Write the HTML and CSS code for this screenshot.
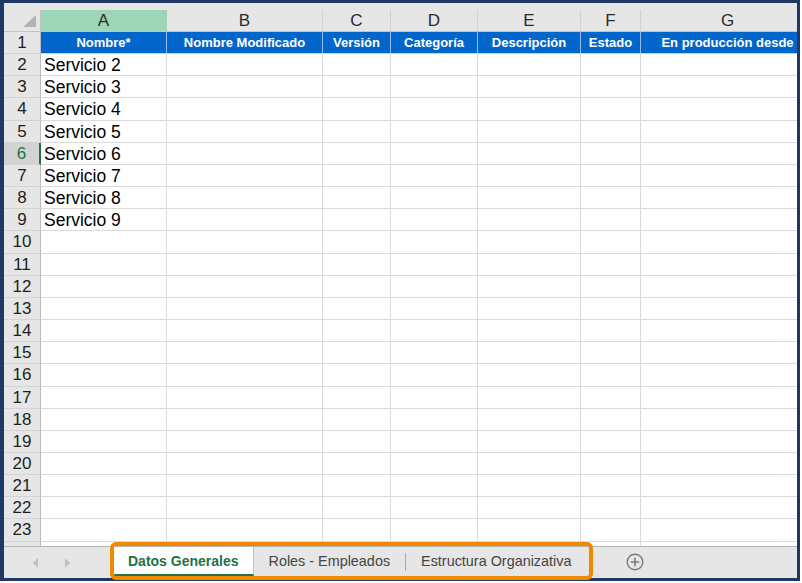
FILE: index.html
```html
<!DOCTYPE html>
<html lang="es">
<head>
    <meta charset="UTF-8">
    <title>Datos Generales</title>
    <link rel="stylesheet" href="styles.css">
</head>
<body>
    <div class="frame">
        <div class="sheet">
            <div class="grid" id="grid">
                <div class="corner"></div>
                <div class="col-head active">A</div>
                <div class="col-head">B</div>
                <div class="col-head">C</div>
                <div class="col-head">D</div>
                <div class="col-head">E</div>
                <div class="col-head">F</div>
                <div class="col-head">G</div>
            </div>
        </div>

        <div class="tabbar">
            <div class="nav">
                <span class="arrow left"></span>
                <span class="arrow right"></span>
            </div>
            <div class="tab current">Datos Generales</div>
            <div class="tab">Roles - Empleados</div>
            <span class="divider"></span>
            <div class="tab">Estructura Organizativa</div>
            <svg class="add" width="18" height="18" viewBox="0 0 18 18">
                <circle cx="9" cy="9" r="7.8" fill="none" stroke="#7a7a7a" stroke-width="1.4"/>
                <path d="M9 4.8v8.4M4.8 9h8.4" stroke="#7a7a7a" stroke-width="1.6"/>
            </svg>
        </div>

        <div class="highlight"></div>
    </div>

    <script>
        // Header row and data
        const headers = ['Nombre*', 'Nombre Modificado', 'Versión', 'Categoría', 'Descripción', 'Estado', 'En producción desde'];
        const names = ['Servicio 2', 'Servicio 3', 'Servicio 4', 'Servicio 5', 'Servicio 6', 'Servicio 7', 'Servicio 8', 'Servicio 9'];
        const selectedRow = 6;
        const grid = document.getElementById('grid');

        function cell(cls, text) {
            const el = document.createElement('div');
            el.className = cls;
            el.textContent = text || '';
            grid.appendChild(el);
        }

        for (let r = 1; r <= 24; r++) {
            cell(r === selectedRow ? 'row-head active' : 'row-head', r);
            for (let c = 0; c < 7; c++) {
                if (r === 1) {
                    cell('cell title', headers[c]);
                } else {
                    cell('cell', c === 0 ? names[r - 2] : '');
                }
            }
        }
    </script>
</body>
</html>
```

FILE: styles.css
```css
body {
    margin: 0;
    background: #ffffff;
    font-family: 'Liberation Sans', Arial, sans-serif;
}

.frame {
    position: relative;
    width: 800px;
    height: 581px;
    box-sizing: border-box;
    border: 3px solid #1f3864;
    border-left-width: 4px;
    background: #e6e6e6;
    display: flex;
    flex-direction: column;
}

/* Grid */
.sheet {
    flex: 1;
    overflow: hidden;
    padding-top: 7px;
    background: #e6e6e6;
}

.grid {
    display: grid;
    grid-template-columns: 37px 126px 156px 68px 87px 103px 60px 174px;
    grid-template-rows: 22px;
    grid-auto-rows: 22.17px;
    background: #ffffff;
}

.grid > div {
    box-sizing: border-box;
    white-space: nowrap;
    overflow: hidden;
}

.corner {
    position: relative;
    background: #e6e6e6;
    border-right: 1px solid #c4c4c4;
    border-bottom: 1px solid #c4c4c4;
}

.corner::after {
    content: '';
    position: absolute;
    right: 4px;
    bottom: 4px;
    border-style: solid;
    border-width: 0 0 12px 13px;
    border-color: transparent transparent #b3b3b3 transparent;
}

.col-head {
    background: #e6e6e6;
    color: #2b2b2b;
    font-size: 17px;
    line-height: 22px;
    text-align: center;
    border-right: 1px solid #d2d2d2;
    border-bottom: 1px solid #c4c4c4;
}

.col-head.active {
    background: #9fd5b7;
    border-right-color: #9fd5b7;
}

.row-head {
    background: #e6e6e6;
    color: #1e1e1e;
    font-size: 17px;
    line-height: 22px;
    text-align: center;
    border-right: 1px solid #bdbdbd;
    border-bottom: 1px solid #d4d4d4;
}

.row-head.active {
    background: #d3d3d3;
    color: #217346;
    border-right: 2px solid #217346;
}

.cell {
    color: #000000;
    font-size: 17.5px;
    line-height: 22px;
    padding-left: 3px;
    border-right: 1px solid #dadada;
    border-bottom: 1px solid #dadada;
}

.cell.title {
    background: #0066cc;
    color: #ffffff;
    font-size: 13px;
    font-weight: bold;
    text-align: center;
    padding-left: 0;
    border-right-color: #94bde8;
    border-bottom-color: #d0d0d0;
}

/* Sheet tabs */
.tabbar {
    height: 32px;
    box-sizing: border-box;
    border-top: 1px solid #b4b4b4;
    background: #e6e6e6;
    display: flex;
    align-items: flex-start;
}

.nav {
    width: 110px;
    height: 31px;
    display: flex;
    align-items: center;
    padding-left: 29px;
    gap: 27px;
    box-sizing: border-box;
}

.arrow {
    width: 0;
    height: 0;
    border-style: solid;
}

.arrow.left {
    border-width: 5px 5px 5px 0;
    border-color: transparent #c2c2c2 transparent transparent;
}

.arrow.right {
    border-width: 5px 0 5px 5px;
    border-color: transparent transparent transparent #c2c2c2;
}

.tab {
    height: 29px;
    line-height: 29px;
    padding: 0 15px;
    font-size: 14.4px;
    color: #444444;
    box-sizing: border-box;
}

.tab.current {
    background: #ffffff;
    color: #217346;
    font-size: 14px;
    font-weight: bold;
    padding: 0 14px;
    line-height: 28px;
    border-bottom: 2px solid #217346;
    border-right: 1px solid #c0c0c0;
}

.divider {
    width: 1px;
    height: 18px;
    margin-top: 6px;
    background: #a8a8a8;
}

.add {
    margin: 6px 0 0 40px;
}

.highlight {
    position: absolute;
    left: 106px;
    top: 539px;
    width: 483px;
    height: 38px;
    box-sizing: border-box;
    border: 4px solid #ef8a00;
    border-radius: 6px;
}
```
